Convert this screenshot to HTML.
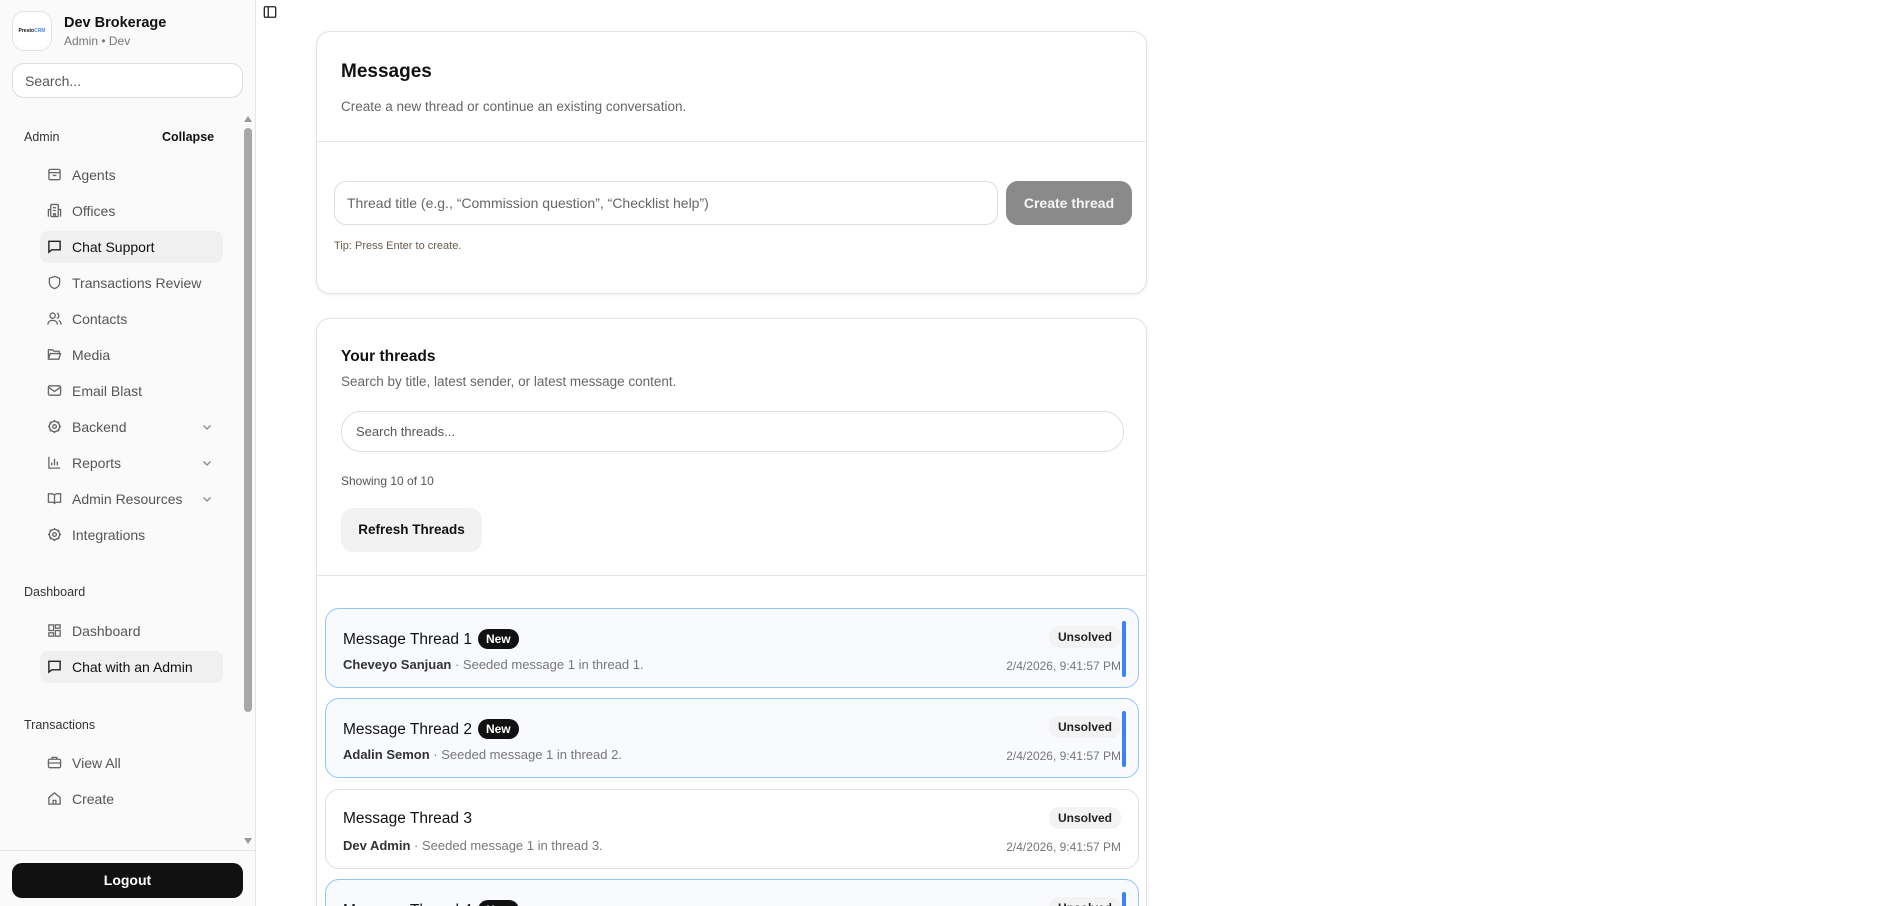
<!DOCTYPE html>
<html><head><meta charset="utf-8"><style>
*{box-sizing:border-box;margin:0;padding:0}
html{width:1903px;height:906px;overflow:hidden}
body{width:1903px;height:906px;overflow:hidden;background:#fff;font-family:"Liberation Sans",sans-serif;color:#111;position:relative}
.sb{position:absolute;left:0;top:0;width:256px;height:906px;background:#fafafa;border-right:1px solid #e5e5e5}
.abs{position:absolute}
.nav{position:absolute;left:40px;width:183px;height:32px;border-radius:8px;font-size:14px;color:#555;display:flex;align-items:center;padding-left:32px}
.nav svg{position:absolute;left:7px;top:8px}
.nav.act{background:#f0f0f0;color:#111}
.lbl{position:absolute;left:24px;font-size:12.5px;color:#333}
.card{position:absolute;left:316px;width:831px;border:1px solid #e3e3e3;border-radius:14px;background:#fff;box-shadow:0 1px 3px rgba(0,0,0,.08)}
.th{position:absolute;left:325px;width:814px;height:80px;border-radius:14px;border:1px solid #e0e0e0;background:#fff}
.th.new{border-color:#93c5fd;background:#f8fafd}
.th .t{position:absolute;left:17px;top:20px;font-size:15.5px;color:#111}
.th .badge{display:inline-block;background:#111;color:#fff;font-size:12px;font-weight:bold;border-radius:10px;padding:3px 8px;margin-left:6px;vertical-align:1px}
.th .s{position:absolute;left:17px;top:48px;font-size:13px;color:#777}
.th .s b{color:#333;font-weight:600}
.th .u{position:absolute;right:17px;top:17px;background:#f3f3f3;border-radius:10px;font-size:12px;font-weight:600;padding:4px 9px;color:#222}
.th .d{position:absolute;right:17px;top:50px;font-size:12px;color:#777}
.th .bar{position:absolute;right:12px;top:12px;width:4px;height:56px;background:#3b82f6;border-radius:2px}
</style></head><body>
<div class="sb">
 <div class="abs" style="left:12px;top:11px;width:40px;height:40px;border:1px solid #e3e3e3;border-radius:12px;background:#fff;font-size:5px;font-weight:bold;display:flex;align-items:center;justify-content:center">Presto<span style="color:#4a8fe0">CRM</span></div>
 <div class="abs" style="left:64px;top:15px;font-size:14.5px;font-weight:bold">Dev Brokerage</div>
 <div class="abs" style="left:64px;top:34px;font-size:12px;color:#777">Admin • Dev</div>
 <div class="abs" style="left:12px;top:63px;width:231px;height:35px;border:1px solid #ddd;border-radius:12px;background:#fff;font-size:14px;color:#555;padding:9px 12px">Search...</div>
 <div class="lbl" style="top:130px">Admin</div>
 <div class="abs" style="left:162px;top:130px;font-size:12.5px;font-weight:bold">Collapse</div>
 <div class="abs" style="left:244px;top:116px;width:0;height:0;border:4px solid transparent;border-bottom:6px solid #999;border-top:0"></div>
 <div class="abs" style="left:244px;top:128px;width:8px;height:584px;background:#a8a8a8;border-radius:4px"></div>
 <div class="abs" style="left:244px;top:838px;width:0;height:0;border:4px solid transparent;border-top:6px solid #999;border-bottom:0"></div>

 <div class="nav" style="top:159px"><svg width="15" height="15" viewBox="0 0 16 16" fill="none" stroke="#666" stroke-width="1.4"><rect x="2" y="2.5" width="12" height="11" rx="1.5"/><path d="M2 6h12M6 9h4"/></svg>Agents</div>
 <div class="nav" style="top:195px"><svg width="15" height="15" viewBox="0 0 16 16" fill="none" stroke="#666" stroke-width="1.4"><rect x="4" y="1.5" width="8" height="13" rx="1"/><path d="M1.5 14.5V7h2.5M14.5 14.5V7H12M6.5 5h3M6.5 8h3M7 14.5v-3h2v3"/></svg>Offices</div>
 <div class="nav act" style="top:231px"><svg width="15" height="15" viewBox="0 0 16 16" fill="none" stroke="#222" stroke-width="1.5"><path d="M2 2.5h12v9H5L2 14z"/></svg>Chat Support</div>
 <div class="nav" style="top:267px"><svg width="15" height="15" viewBox="0 0 16 16" fill="none" stroke="#666" stroke-width="1.4"><path d="M8 1.5l5.5 2v4.5c0 3.5-2.5 5.5-5.5 6.5C5 13.5 2.5 11.5 2.5 8V3.5z"/></svg>Transactions Review</div>
 <div class="nav" style="top:303px"><svg width="15" height="15" viewBox="0 0 16 16" fill="none" stroke="#666" stroke-width="1.4"><circle cx="6" cy="5" r="2.8"/><path d="M1 14.5c0-3 2.2-4.5 5-4.5s5 1.5 5 4.5M10.5 2.3a2.8 2.8 0 010 5.4M12.5 10.3c1.5.6 2.5 2 2.5 4.2"/></svg>Contacts</div>
 <div class="nav" style="top:339px"><svg width="15" height="15" viewBox="0 0 16 16" fill="none" stroke="#666" stroke-width="1.4"><path d="M1.5 13V3h4.5l1.5 1.5h5.5V7M1.5 13l2-6h11l-2 6z"/></svg>Media</div>
 <div class="nav" style="top:375px"><svg width="15" height="15" viewBox="0 0 16 16" fill="none" stroke="#666" stroke-width="1.4"><rect x="1.5" y="3" width="13" height="10" rx="1.5"/><path d="M1.5 4.5L8 9l6.5-4.5"/></svg>Email Blast</div>
 <div class="nav" style="top:411px"><svg width="15" height="15" viewBox="0 0 16 16" fill="none" stroke="#666" stroke-width="1.4"><circle cx="8" cy="8" r="5.5"/><circle cx="8" cy="8" r="2"/><path d="M8 1v2M8 13v2M1 8h2M13 8h2M3 3l1.4 1.4M11.6 11.6L13 13M3 13l1.4-1.4M11.6 4.4L13 3"/></svg>Backend<svg width="12" height="12" viewBox="0 0 12 12" fill="none" stroke="#888" stroke-width="1.3" style="left:auto;right:10px;top:10px"><path d="M2.5 4.5L6 8l3.5-3.5"/></svg></div>
 <div class="nav" style="top:447px"><svg width="15" height="15" viewBox="0 0 16 16" fill="none" stroke="#666" stroke-width="1.4"><path d="M2 2v12h12M5 11V8M8 11V4M11 11V7"/></svg>Reports<svg width="12" height="12" viewBox="0 0 12 12" fill="none" stroke="#888" stroke-width="1.3" style="left:auto;right:10px;top:10px"><path d="M2.5 4.5L6 8l3.5-3.5"/></svg></div>
 <div class="nav" style="top:483px"><svg width="15" height="15" viewBox="0 0 16 16" fill="none" stroke="#666" stroke-width="1.4"><path d="M1.5 3h4A2.5 2.5 0 018 5.5V14a2 2 0 00-2-2H1.5zM14.5 3h-4A2.5 2.5 0 008 5.5V14a2 2 0 012-2h4.5z"/></svg>Admin Resources<svg width="12" height="12" viewBox="0 0 12 12" fill="none" stroke="#888" stroke-width="1.3" style="left:auto;right:10px;top:10px"><path d="M2.5 4.5L6 8l3.5-3.5"/></svg></div>
 <div class="nav" style="top:519px"><svg width="15" height="15" viewBox="0 0 16 16" fill="none" stroke="#666" stroke-width="1.4"><circle cx="8" cy="8" r="5.5"/><circle cx="8" cy="8" r="2"/><path d="M8 1v2M8 13v2M1 8h2M13 8h2M3 3l1.4 1.4M11.6 11.6L13 13M3 13l1.4-1.4M11.6 4.4L13 3"/></svg>Integrations</div>

 <div class="lbl" style="top:585px">Dashboard</div>
 <div class="nav" style="top:615px"><svg width="15" height="15" viewBox="0 0 16 16" fill="none" stroke="#666" stroke-width="1.4"><rect x="2" y="2" width="5" height="6"/><rect x="9" y="2" width="5" height="3.5"/><rect x="9" y="8" width="5" height="6"/><rect x="2" y="10.5" width="5" height="3.5"/></svg>Dashboard</div>
 <div class="nav act" style="top:651px"><svg width="15" height="15" viewBox="0 0 16 16" fill="none" stroke="#222" stroke-width="1.5"><path d="M2 2.5h12v9H5L2 14z"/></svg>Chat with an Admin</div>
 <div class="lbl" style="top:718px">Transactions</div>
 <div class="nav" style="top:747px"><svg width="15" height="15" viewBox="0 0 16 16" fill="none" stroke="#666" stroke-width="1.4"><rect x="1.5" y="4.5" width="13" height="9" rx="1.5"/><path d="M5.5 4.5V2.5h5v2M1.5 8.5h13"/></svg>View All</div>
 <div class="nav" style="top:783px"><svg width="15" height="15" viewBox="0 0 16 16" fill="none" stroke="#666" stroke-width="1.4"><path d="M2 7l6-5 6 5v7H2zM6.5 14v-4h3v4"/></svg>Create</div>

 <div class="abs" style="left:0;top:850px;width:255px;border-top:1px solid #e5e5e5"></div>
 <div class="abs" style="left:12px;top:863px;width:231px;height:35px;background:#111;border-radius:10px;color:#fff;font-size:14px;font-weight:bold;text-align:center;line-height:35px">Logout</div>
</div>

<svg class="abs" style="left:263px;top:5px" width="14" height="14" viewBox="0 0 16 16" fill="none" stroke="#222" stroke-width="1.5"><rect x="1.5" y="2" width="13" height="12" rx="1.5"/><path d="M6 2v12"/></svg>

<div class="card" style="top:31px;height:263px">
 <div class="abs" style="left:24px;top:29px;font-size:19px;font-weight:600">Messages</div>
 <div class="abs" style="left:24px;top:67px;font-size:13.5px;color:#666">Create a new thread or continue an existing conversation.</div>
 <div class="abs" style="left:0;top:109px;width:829px;border-top:1px solid #e5e5e5"></div>
 <div class="abs" style="left:17px;top:149px;width:664px;height:44px;border:1px solid #ddd;border-radius:12px;font-size:14px;color:#666;padding:13px 12px">Thread title (e.g., “Commission question”, “Checklist help”)</div>
 <div class="abs" style="left:689px;top:149px;width:126px;height:44px;background:#8a8a8a;border-radius:12px;color:#f5f5f5;font-size:14px;font-weight:bold;text-align:center;line-height:44px">Create thread</div>
 <div class="abs" style="left:17px;top:208px;font-size:11px;color:#6b5a4a">Tip: Press Enter to create.</div>
</div>

<div class="card" style="top:318px;height:620px">
 <div class="abs" style="left:24px;top:29px;font-size:15.5px;font-weight:600">Your threads</div>
 <div class="abs" style="left:24px;top:55px;font-size:13.5px;color:#666">Search by title, latest sender, or latest message content.</div>
 <div class="abs" style="left:24px;top:92px;width:783px;height:41px;border:1px solid #ddd;border-radius:20px;font-size:13px;color:#555;padding:12px 14px">Search threads...</div>
 <div class="abs" style="left:24px;top:155px;font-size:12px;color:#555">Showing 10 of 10</div>
 <div class="abs" style="left:24px;top:189px;width:141px;height:44px;background:#f2f2f2;border-radius:12px;font-size:13.5px;font-weight:bold;text-align:center;line-height:44px">Refresh Threads</div>
 <div class="abs" style="left:0;top:256px;width:829px;border-top:1px solid #e5e5e5"></div>
</div>

<div class="th new" style="top:608px"><div class="t">Message Thread 1<span class="badge">New</span></div><div class="s"><b>Cheveyo Sanjuan</b> · Seeded message 1 in thread 1.</div><div class="u">Unsolved</div><div class="d">2/4/2026, 9:41:57 PM</div><div class="bar"></div></div>
<div class="th new" style="top:698px"><div class="t">Message Thread 2<span class="badge">New</span></div><div class="s"><b>Adalin Semon</b> · Seeded message 1 in thread 2.</div><div class="u">Unsolved</div><div class="d">2/4/2026, 9:41:57 PM</div><div class="bar"></div></div>
<div class="th" style="top:789px"><div class="t">Message Thread 3</div><div class="s"><b>Dev Admin</b> · Seeded message 1 in thread 3.</div><div class="u">Unsolved</div><div class="d">2/4/2026, 9:41:57 PM</div></div>
<div class="th new" style="top:879px"><div class="t">Message Thread 4<span class="badge">New</span></div><div class="u">Unsolved</div><div class="bar"></div></div>
</body></html>
